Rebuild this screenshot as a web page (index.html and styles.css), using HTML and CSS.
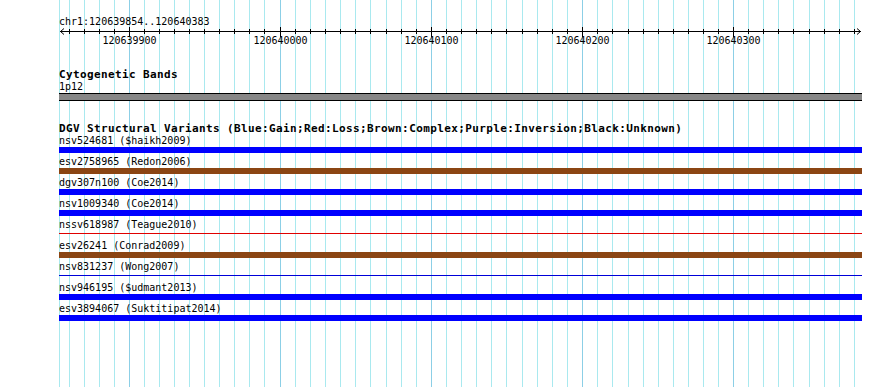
FILE: index.html
```html
<!DOCTYPE html>
<html lang="en">
<head>
	<meta charset="UTF-8">
	<title>chr1:120639854..120640383</title>
	<link rel="stylesheet" href="styles.css">
</head>
<body>
	<div class="view">
		<!-- background grid, one line per 10 bp -->
		<svg class="grid" width="890" height="387">
			<path class="grid-minor" d="M59.5 0V387M69.5 0V387M84.5 0V387M99.5 0V387M114.5 0V387M144.5 0V387M159.5 0V387M174.5 0V387M189.5 0V387M204.5 0V387M219.5 0V387M234.5 0V387M249.5 0V387M264.5 0V387M295.5 0V387M310.5 0V387M325.5 0V387M340.5 0V387M355.5 0V387M370.5 0V387M386.5 0V387M401.5 0V387M416.5 0V387M446.5 0V387M461.5 0V387M476.5 0V387M491.5 0V387M506.5 0V387M522.5 0V387M537.5 0V387M552.5 0V387M567.5 0V387M597.5 0V387M612.5 0V387M628.5 0V387M643.5 0V387M658.5 0V387M673.5 0V387M688.5 0V387M703.5 0V387M718.5 0V387M748.5 0V387M763.5 0V387M778.5 0V387M793.5 0V387M809.5 0V387M824.5 0V387M839.5 0V387M854.5 0V387"/>
			<path class="grid-major" d="M129.5 0V387M280.5 0V387M431.5 0V387M582.5 0V387M733.5 0V387"/>
		</svg>

		<div class="ruler">
			<div class="location">chr1:120639854..120640383</div>
			<svg class="scale" width="890" height="20">
				<path class="axis" d="M60 4.5H861M64 1.5L60.5 4.5L64 7.5M857 1.5L860.5 4.5L857 7.5"/>
				<path class="axis" d="M69.5 2V7M84.5 2V7M99.5 2V7M114.5 2V7M144.5 2V7M159.5 2V7M174.5 2V7M189.5 2V7M204.5 2V7M219.5 2V7M234.5 2V7M249.5 2V7M264.5 2V7M295.5 2V7M310.5 2V7M325.5 2V7M340.5 2V7M355.5 2V7M370.5 2V7M386.5 2V7M401.5 2V7M416.5 2V7M446.5 2V7M461.5 2V7M476.5 2V7M491.5 2V7M506.5 2V7M522.5 2V7M537.5 2V7M552.5 2V7M567.5 2V7M597.5 2V7M612.5 2V7M628.5 2V7M643.5 2V7M658.5 2V7M673.5 2V7M688.5 2V7M703.5 2V7M718.5 2V7M748.5 2V7M763.5 2V7M778.5 2V7M793.5 2V7M809.5 2V7M824.5 2V7M839.5 2V7M854.5 2V7"/>
				<path class="axis" d="M129.5 0V10M280.5 0V10M431.5 0V10M582.5 0V10M733.5 0V10"/>
				<text class="scale-label" x="129.5" y="16.5">120639900</text>
				<text class="scale-label" x="280.5" y="16.5">120640000</text>
				<text class="scale-label" x="431.5" y="16.5">120640100</text>
				<text class="scale-label" x="582.5" y="16.5">120640200</text>
				<text class="scale-label" x="733.5" y="16.5">120640300</text>
			</svg>
		</div>

		<div class="track cyto">
			<div class="track-title">Cytogenetic Bands</div>
			<div class="feature-label">1p12</div>
			<div class="band"></div>
		</div>

		<div class="track dgv">
			<div class="track-title">DGV Structural Variants (Blue:Gain;Red:Loss;Brown:Complex;Purple:Inversion;Black:Unknown)</div>
			<div class="feature">
				<div class="feature-label">nsv524681 ($haikh2009)</div>
				<div class="bar gain"></div>
			</div>
			<div class="feature">
				<div class="feature-label">esv2758965 (Redon2006)</div>
				<div class="bar complex"></div>
			</div>
			<div class="feature">
				<div class="feature-label">dgv307n100 (Coe2014)</div>
				<div class="bar gain"></div>
			</div>
			<div class="feature">
				<div class="feature-label">nsv1009340 (Coe2014)</div>
				<div class="bar gain"></div>
			</div>
			<div class="feature">
				<div class="feature-label">nssv618987 (Teague2010)</div>
				<div class="line loss"></div>
			</div>
			<div class="feature">
				<div class="feature-label">esv26241 (Conrad2009)</div>
				<div class="bar complex"></div>
			</div>
			<div class="feature">
				<div class="feature-label">nsv831237 (Wong2007)</div>
				<div class="line gain"></div>
			</div>
			<div class="feature">
				<div class="feature-label">nsv946195 ($udmant2013)</div>
				<div class="bar gain"></div>
			</div>
			<div class="feature">
				<div class="feature-label">esv3894067 (Suktitipat2014)</div>
				<div class="bar gain"></div>
			</div>
		</div>
	</div>
</body>
</html>
```

FILE: styles.css
```css
body {
	margin: 0;
	background: #fff;
	color: #000;
	font-family: "DejaVu Sans Mono", "Liberation Mono", monospace;
	font-size: 10px;
}
.view {
	position: relative;
	width: 890px;
	height: 387px;
	overflow: hidden;
}
.grid {
	position: absolute;
	top: 0;
	left: 0;
}
.grid-minor {
	stroke: #a9e9ef;
	stroke-width: 1;
}
.grid-major {
	stroke: #8ccfe6;
	stroke-width: 1;
}
.ruler, .track {
	position: relative;
}
.location {
	padding: 17px 0 0 59px;
	line-height: 10px;
	height: 10px;
}
.scale {
	display: block;
}
.axis {
	fill: none;
	stroke: #000;
	stroke-width: 1;
}
.scale-label {
	font-family: "DejaVu Sans Mono", "Liberation Mono", monospace;
	font-size: 10px;
	text-anchor: middle;
	fill: #000;
}
.track {
	padding-left: 59px;
	margin-top: 21px;
}
.track-title {
	font-weight: bold;
	font-size: 11px;
	letter-spacing: .38px;
	line-height: 13px;
	white-space: nowrap;
}
.feature-label {
	line-height: 11px;
	white-space: nowrap;
}
.band {
	width: 803px;
	height: 8px;
	margin-top: 1px;
	box-sizing: border-box;
	border-top: 1px solid #000;
	border-bottom: 1px solid #000;
	background: #878787;
}
.feature {
	height: 21px;
}
.bar {
	width: 803px;
	height: 6px;
	margin-top: 1px;
}
.line {
	width: 803px;
	height: 1px;
	margin-top: 3px;
}
.bar.gain {
	background: #0000ff;
}
.bar.complex {
	background: #8b4513;
}
.line.gain {
	background: #0000d8;
}
.line.loss {
	background: #e00000;
}
```
